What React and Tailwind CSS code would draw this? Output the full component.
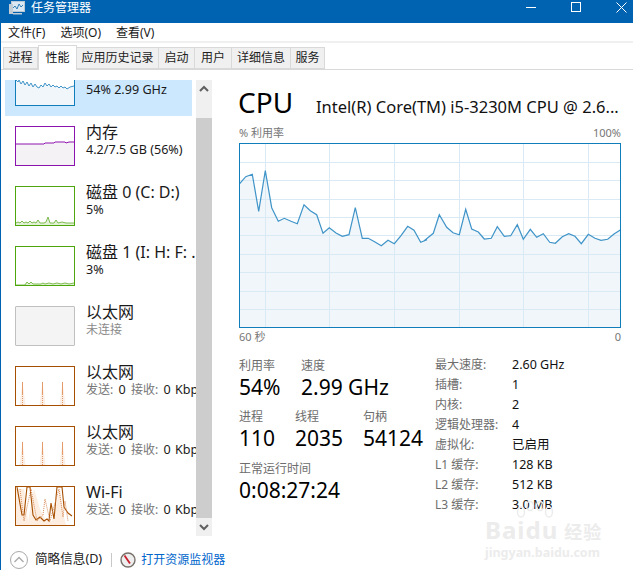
import React from "react";

const FONT = { fontFamily: '"Noto Sans", "Noto Sans CJK SC", sans-serif' };

const cpuLeft = [[28,192],[47,170],[67,163],[86,274],[106,152],[125,263],[145,304],[163,295],[183,304],[202,311],[222,254],[241,272],[260,284],[279,340],[298,323],[318,339],[337,349],[357,344],[376,263],[397,355],[415,355],[435,366],[454,377],[474,361],[493,371],[513,347],[533,319],[552,331],[572,367],[591,359]];
const cpuRight = [[0,360],[25,340],[43,284],[65,322],[84,338],[103,344],[122,268],[140,327],[160,336],[178,357],[199,355],[217,320],[238,349],[257,347],[277,314],[295,358],[316,328],[335,352],[355,341],[374,367],[391,370],[412,350],[431,341],[450,349],[469,371],[490,343],[510,355],[528,361],[548,358],[567,342],[586,330]];

// zoom crops -> chart coordinates
const cpuPoints = [
  ...cpuLeft.map(([x, y]) => [x / 3 + 230 - 239, y / 3 + 120 - 143]),
  ...cpuRight.map(([x, y]) => [x / 3 + 425 - 239, y / 3 + 120 - 143]),
];
const rows = [19.5, 37.5, 56.5, 74.5, 92.5, 111.5, 129.5, 148.5, 166.5];
const cols = [26.5, 90.5, 155.5, 220.5, 284.5, 349.5];

const CpuChart = () => {
  const line = cpuPoints.map((p) => p.map((n) => n.toFixed(1)).join(",")).join(" ");
  return (
    <svg width="382" height="185" className="block">
      <polygon points={`0.5,184 ${line} 381,184`} fill="#f1f6fa" />
      {rows.map((y) => <line key={y} x1="1" x2="381" y1={y} y2={y} stroke="#d9eaf4" />)}
      {cols.map((x) => <line key={x} x1={x} x2={x} y1="1" y2="184" stroke="#d9eaf4" />)}
      <polyline points={line} fill="none" stroke="#3f94c8" strokeWidth="1.2" />
      <rect x="0.5" y="0.5" width="381" height="184" fill="none" stroke="#117dbb" />
    </svg>
  );
};

const Thumb = ({ border, bg = "bg-white", children }) => (
  <div className={`w-[60px] h-[40px] mt-[10px] shrink-0 border ${border} ${bg} overflow-hidden`}>
    <svg width="58" height="38" className="block">{children}</svg>
  </div>
);

const cpuMini = "0,13 2,15 3,13 5,17 7,14 9,18 11,15 13,19 15,16 17,20 19,17 21,20 23,21 25,18 27,20 29,16 31,19 33,17 35,20 37,18 39,20 41,19 43,21 45,19 47,21 49,20 51,22 54,20 58,19";
const CpuThumb = () => (
  <Thumb border="border-[#117dbb]">
    <polygon points={`${cpuMini} 58,38 0,38`} fill="#f1f6fa" />
    <polyline points={cpuMini} fill="none" stroke="#3f94c8" />
  </Thumb>
);

const memMini = "0,17 28,17 29,16 38,16 39,15 49,15 50,16 53,15 58,15";
const MemThumb = () => (
  <Thumb border="border-[#8b12ae]">
    <polygon points={`${memMini} 58,38 0,38`} fill="#f4f2f4" />
    <polyline points={memMini} fill="none" stroke="#8b12ae" />
  </Thumb>
);

const DiskThumb = ({ points }) => (
  <Thumb border="border-[#4da60c]">
    <polygon points={`0,38 ${points} 58,38`} fill="#e4f1d9" />
    <polyline points={points} fill="none" stroke="#7dbb50" />
  </Thumb>
);

const NetThumb = () => (
  <Thumb border="border-[#a74f01]">
    {[6.5, 26.5, 46.5].map((x) => (
      <g key={x}>
        <polygon points={`${x - 3},38 ${x},15 ${x + 3},38`} fill="#fbeee4" />
        <line x1={x} x2={x} y1="15" y2="27" stroke="#e59a6a" />
        <line x1={x} x2={x} y1="27" y2="38" stroke="#e59a6a" strokeDasharray="1 1" />
      </g>
    ))}
  </Thumb>
);

const WifiThumb = () => (
  <Thumb border="border-[#a74f01]">
    <polygon points="0,2 8,2 12,34 18,2 24,22 30,34 36,34 44,2 48,30 50,38 0,38" fill="#fdeee1" />
    <polyline points="1,0 6,28 8,28 11,0 14,0 17,28 20,33 24,30 28,34 31,32 33,34 35,16 38,32 41,0 46,0 48,20 52,26 56,29" fill="none" stroke="#a74f01" strokeWidth="1.1" />
    <polyline points="4,2 8,34 15,2 21,34 27,28 29,12 34,34 43,2 47,30 49,14 52,34" fill="none" stroke="#d98a55" strokeDasharray="1 1" />
  </Thumb>
);

const SideItem = ({ thumb, title, sub, selected, muted }) => (
  <div className={`flex gap-[11px] h-[60px] w-[187px] pl-[10px] whitespace-nowrap ${selected ? "bg-[#cce8ff]" : ""}`}>
    {thumb}
    <div className="mt-[6px]">
      <div className="h-[20px] text-[16px] leading-[20px] text-[#1a1a1a]">{title}</div>
      <div className={`text-[12.6px] leading-[16px] ${muted ? "text-[#8a8a8a]" : "text-[#1a1a1a]"}`}>{sub}</div>
    </div>
  </div>
);

const NetSub = () => (
  <>
    <span className="text-[#767676] text-[12px]">发送:</span> <span className="ml-[2px]">0</span>{" "}
    <span className="ml-[2px] text-[#767676] text-[12px]">接收:</span> <span className="ml-[2px]">0</span> <span className="ml-[1px]">Kbps</span>
  </>
);

const Tab = ({ label, width, active }) =>
  active ? (
    <div className={`${width} h-[25px] -mb-px bg-white border border-b-0 border-[#d9d9d9] flex items-center justify-center text-[12px] text-[#111]`}>{label}</div>
  ) : (
    <div className={`${width} h-[22px] bg-[#f0f0f0] border border-l-0 border-[#d9d9d9] flex items-center justify-center text-[12px] text-[#222]`}>{label}</div>
  );

const Stat = ({ label, value, width }) => (
  <div className={width}>
    <div className="text-[12px] leading-[16px] text-[#6d6d6d]">{label}</div>
    <div className="text-[21px] leading-[26px] text-black">{value}</div>
  </div>
);

const specs = [
  ["最大速度:", "2.60 GHz"],
  ["插槽:", "1"],
  ["内核:", "2"],
  ["逻辑处理器:", "4"],
  ["虚拟化:", "已启用"],
  ["L1 缓存:", "128 KB"],
  ["L2 缓存:", "512 KB"],
  ["L3 缓存:", "3.0 MB"],
];

export default function App() {
  return (
    <div style={FONT} className="relative w-[633px] h-[570px] bg-white flex flex-col overflow-hidden border-l border-[#0063b1]">
      {/* Title bar */}
      <div className="h-[23px] -ml-px bg-[#0063b1] flex items-start text-white shrink-0">
        <svg width="18" height="15" viewBox="0 0 18 15" className="ml-[8px] mr-[5px] mt-[1px]">
          <rect x="3.5" y="0.5" width="13" height="10" fill="#dbe8f3" stroke="#b9c8d4" />
          <polyline points="5,7 7,5 9,8 11,3 13,6 15,4" fill="none" stroke="#2f7fb8" />
          <rect x="1" y="3" width="4" height="10" fill="#c2ccd4" />
          <rect x="5" y="12" width="9" height="1.5" fill="#c2ccd4" />
        </svg>
        <span className="text-[12px] leading-[16px]">任务管理器</span>
        <div className="ml-auto flex items-start mt-[2px] mr-[6px]">
          <svg width="10" height="10" className="mr-[35px]"><line x1="0" x2="10" y1="5.5" y2="5.5" stroke="white" /></svg>
          <svg width="10" height="10" className="mr-[35px]"><rect x="0.5" y="0.5" width="9" height="9" fill="none" stroke="white" /></svg>
          <svg width="11" height="11"><path d="M0.5 0.5 L10.5 10.5 M10.5 0.5 L0.5 10.5" stroke="white" /></svg>
        </div>
      </div>

      {/* Menu */}
      <div className="h-[20px] pt-[1px] flex items-center gap-[15px] pl-[7px] border-b-2 border-[#f0f0f0] text-[12px] text-[#1a1a1a] shrink-0">
        <span>文件(F)</span>
        <span>选项(O)</span>
        <span>查看(V)</span>
      </div>

      {/* Tabs */}
      <div className="h-[27px] pl-[2px] flex items-end border-b border-[#d9d9d9] shrink-0">
        <div className="w-[35px] h-[22px] bg-[#f0f0f0] border border-[#d9d9d9] flex items-center justify-center text-[12px] text-[#222]">进程</div>
        <Tab label="性能" width="w-[39px]" active />
        <Tab label="应用历史记录" width="w-[82px]" />
        <Tab label="启动" width="w-[36px]" />
        <Tab label="用户" width="w-[37px]" />
        <Tab label="详细信息" width="w-[59px]" />
        <Tab label="服务" width="w-[34px]" />
      </div>

      {/* Body */}
      <div className="flex h-[475px] shrink-0">
        {/* Sidebar */}
        <div className="w-[211px] pl-[4px] pt-[10px] flex shrink-0">
          <div className="w-[191px] h-[456px] overflow-hidden shrink-0">
            <div className="-mt-[24px]">
              <SideItem selected thumb={<CpuThumb />} title="" sub="54% 2.99 GHz" />
              <SideItem thumb={<MemThumb />} title="内存" sub="4.2/7.5 GB (56%)" />
              <SideItem thumb={<DiskThumb points="0,36 2,35 4,36 6,34 8,36 10,35 12,36 14,34 16,36 18,35 20,36 22,33 24,36 28,36 30,35 32,30 34,36 38,36 40,33 42,36 46,35 50,36 58,36" />} title="磁盘 0 (C: D:)" sub="5%" />
              <SideItem thumb={<DiskThumb points="0,38 9,38 11,35 13,37 15,35 17,37 25,37 27,36 29,37 33,36 37,37 41,36 45,37 49,36 53,37 58,36" />} title="磁盘 1 (I: H: F: ." sub="3%" />
              <div className="flex gap-[11px] h-[60px] w-[187px] pl-[10px] whitespace-nowrap">
                <div className="w-[60px] h-[40px] mt-[10px] shrink-0 border border-[#c0c0c0] bg-[#f4f4f4] rounded-[1px]" />
                <div className="mt-[6px]">
                  <div className="text-[16px] leading-[20px] text-[#1a1a1a]">以太网</div>
                  <div className="text-[12px] leading-[16px] text-[#8a8a8a]">未连接</div>
                </div>
              </div>
              <SideItem thumb={<NetThumb />} title="以太网" sub={<NetSub />} />
              <SideItem thumb={<NetThumb />} title="以太网" sub={<NetSub />} />
              <SideItem thumb={<WifiThumb />} title="Wi-Fi" sub={<NetSub />} />
            </div>
          </div>
          {/* Scrollbar */}
          <div className="w-[16px] h-[456px] bg-[#f0f0f0] flex flex-col shrink-0">
            <div className="h-[38px] flex justify-center pt-[5px]">
              <svg width="10" height="8"><polyline points="1,6 5,2 9,6" fill="none" stroke="#606060" strokeWidth="2" /></svg>
            </div>
            <div className="h-[400px] bg-[#cdcdcd]" />
            <div className="h-[18px] flex items-center justify-center">
              <svg width="10" height="8"><polyline points="1,2 5,6 9,2" fill="none" stroke="#606060" strokeWidth="2" /></svg>
            </div>
          </div>
        </div>

        {/* Detail panel */}
        <div className="w-[382px] ml-[27px] shrink-0">
          <div className="h-[54px] flex items-baseline pt-[13px] -ml-px whitespace-nowrap">
            <span className="text-[28px] leading-[38px] text-black w-[78px]">CPU</span>
            <span className="text-[16.5px] text-[#111]">Intel(R) Core(TM) i5-3230M CPU @ 2.6...</span>
          </div>
          <div className="h-[19px] flex justify-between items-center text-[11px] text-[#767676]">
            <span>% 利用率</span>
            <span>100%</span>
          </div>
          <CpuChart />
          <div className="h-[19px] flex justify-between items-center text-[11px] text-[#767676]">
            <span>60 秒</span>
            <span>0</span>
          </div>

          <div className="flex mt-[11px]">
            <div className="w-[196px] shrink-0">
              <div className="flex">
                <Stat label="利用率" value="54%" width="w-[62px]" />
                <Stat label="速度" value="2.99 GHz" />
              </div>
              <div className="flex mt-[9px]">
                <Stat label="进程" value="110" width="w-[56px]" />
                <Stat label="线程" value="2035" width="w-[68px]" />
                <Stat label="句柄" value="54124" />
              </div>
              <div className="mt-[10px]">
                <Stat label="正常运行时间" value="0:08:27:24" />
              </div>
            </div>
            <div className="text-[12.5px] -mt-[3px]">
              {specs.map(([k, v]) => (
                <div key={k} className="flex h-[20px] items-center">
                  <span className="w-[77px] text-[#6d6d6d] text-[12px]">{k}</span>
                  <span className="text-[#111]">{v}</span>
                </div>
              ))}
            </div>
          </div>
        </div>
      </div>

      {/* Footer */}
      <div className="h-[25px] pt-[4px] flex items-center pl-[8px] text-[12.6px] shrink-0">
        <svg width="20" height="20" viewBox="0 0 20 20">
          <circle cx="10" cy="10" r="8.5" fill="none" stroke="#a9a9a9" />
          <polyline points="5.5,12 10,7.5 14.5,12" fill="none" stroke="#a9a9a9" strokeWidth="1.3" />
        </svg>
        <span className="ml-[6px] text-[#222]">简略信息(D)</span>
        <div className="w-px h-[14px] bg-[#c8c8c8] ml-[9px] mr-[8px]" />
        <svg width="16" height="16" viewBox="0 0 16 16">
          <circle cx="8" cy="8" r="7" fill="#eeeeee" stroke="#77706a" strokeWidth="1.4" />
          <line x1="4.5" y1="3.5" x2="10" y2="11.5" stroke="#c8202c" strokeWidth="1.8" />
        </svg>
        <span className="ml-[5px] text-[12px] text-[#0066cc]">打开资源监视器</span>
      </div>

      {/* Baidu watermark */}
      <svg width="40" height="24" viewBox="0 0 40 24" className="absolute left-[514px] top-[501px] pointer-events-none">
        <g fill="none" stroke="#ececec" strokeWidth="1.5">
          <ellipse cx="6" cy="11" rx="3.5" ry="5" />
          <ellipse cx="15" cy="5" rx="3.5" ry="4.5" />
          <ellipse cx="25" cy="5" rx="3.5" ry="4.5" />
          <ellipse cx="34" cy="11" rx="3.5" ry="5" />
        </g>
      </svg>
      <div className="absolute left-[484px] top-[518px] text-[#ececec] pointer-events-none whitespace-nowrap">
        <div className="text-[24px] leading-[24px] font-bold tracking-[1px]">Baidu<span className="text-[18px] ml-[6px]">经验</span></div>
        <div className="text-[12.5px] leading-[14px] font-bold mt-[2px]">jingyan.baidu.com</div>
      </div>
    </div>
  );
}
